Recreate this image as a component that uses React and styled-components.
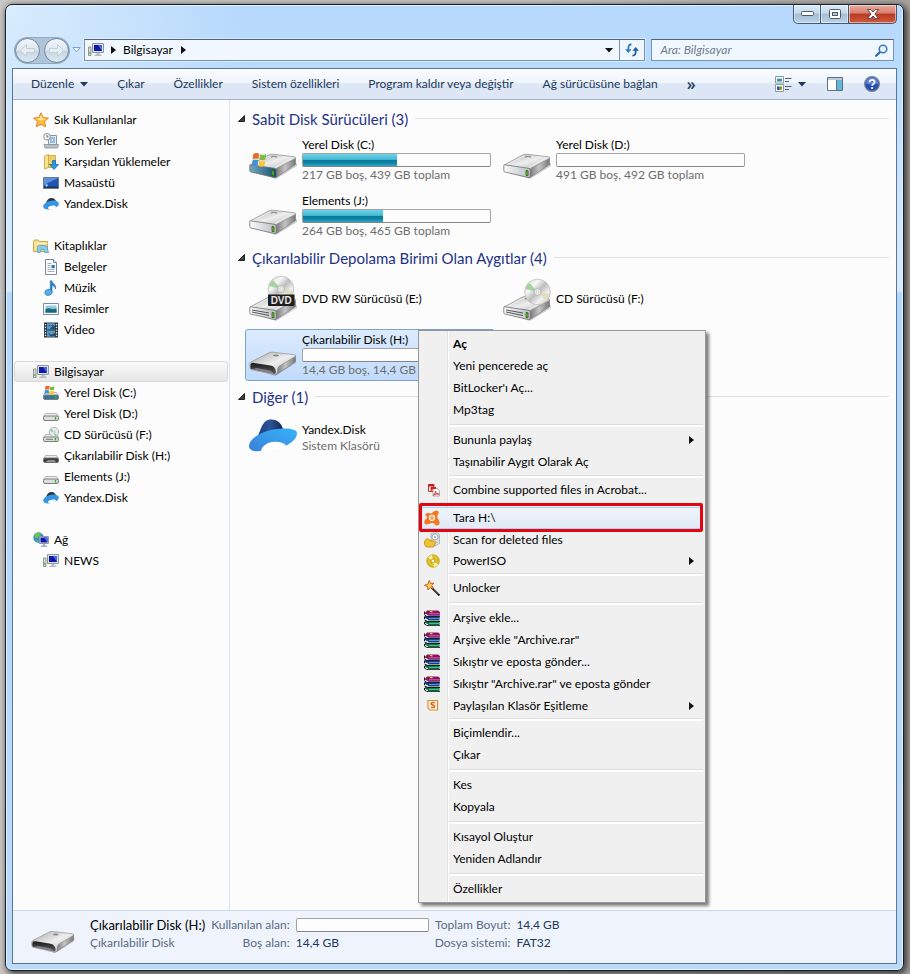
import React from "react";
import styled, { createGlobalStyle, css } from "styled-components";

const GlobalStyle = createGlobalStyle`
  * {
    box-sizing: border-box;
  }
  body {
    margin: 0;
    background: linear-gradient(to right, #c9c7c5 0, #c9c7c5 60%, #a5a2a0 100%);
    font-family: Lato, "Open Sans", "Noto Sans", sans-serif;
    font-size: 12px;
    line-height: 16px;
    color: #000;
  }
  button, input {
    font: inherit;
    color: inherit;
    margin: 0;
    padding: 0;
    border: none;
    background: none;
  }
  a {
    color: inherit;
    text-decoration: none;
  }
  svg {
    display: block;
    flex: none;
  }
  h2, ul, dl, dd, dt, p {
    margin: 0;
    padding: 0;
    font-weight: normal;
    list-style: none;
  }
`;

/* ---------- window frame ---------- */

const Page = styled.div`
  display: flex;
  min-height: 100vh;
  padding: 4px 6px 3px 5px;
`;

const Window = styled.div`
  display: flex;
  flex-direction: column;
  flex: 1;
  min-width: 0;
  padding: 0 6px 6px;
  border: 1px solid #15202c;
  border-radius: 7px;
  background:
    radial-gradient(ellipse at 0 0, #d9ecfd 0, rgba(217, 236, 253, 0) 240px),
    linear-gradient(#b6d8fc 0, #b9dbfd 70px, #cfe6fb 200px, #d9ebfb 286px, #b4d6fa 288px, #bbdafa 100%);
  box-shadow: inset 0 0 0 1px #e2f2ff, 2px 2px 6px 1px #3d3a38;
`;

const Caption = styled.div`
  display: flex;
  justify-content: flex-end;
`;

const CaptionButton = styled.button`
  display: flex;
  align-items: center;
  justify-content: center;
  width: ${(p) => (p.$close ? 48 : 28)}px;
  height: 19px;
  border: 1px solid #46586e;
  border-top: none;
  border-left-width: ${(p) => (p.$first ? 1 : 0)}px;
  border-radius: ${(p) => (p.$first ? "0 0 0 5px" : p.$close ? "0 0 5px 0" : "0")};
  background: ${(p) =>
    p.$close
      ? "linear-gradient(#e9aa9c 0, #d8806f 45%, #bb3a24 50%, #cf5a3b 100%)"
      : "linear-gradient(#dcebfa 0, #c5d7ea 45%, #a5bdd5 50%, #b9d2eb 100%)"};
  box-shadow: inset 0 0 0 1px rgba(255, 255, 255, 0.5);
`;

const NavRow = styled.div`
  display: flex;
  align-items: center;
  margin: 15px 3px 7px 3px;
  height: 22px;
`;

const NavButtons = styled.div`
  display: flex;
  align-items: center;
  gap: 4px;
  height: 25px;
  border-radius: 13px;
  background: #adc4da;
  box-shadow: 0 0 0 1px #94abc2;
`;

const RoundButton = styled.button`
  display: flex;
  align-items: center;
  justify-content: center;
  width: 25px;
  height: 25px;
  border: 1px solid #75889b;
  border-radius: 50%;
  background: linear-gradient(#f1f6fb 0, #dce6f0 48%, #c9d6e3 52%, #dbe9f5 100%);
`;

const HistoryButton = styled.button`
  width: 9px;
  margin: 0 3px;
`;

const AddressBar = styled.div`
  display: flex;
  align-items: center;
  flex: 22;
  min-width: 0;
  height: 22px;
  padding-left: 3px;
  border: 1px solid #7c93ad;
  border-top-color: #4f6478;
  background: #f0f7ff;
  box-shadow: 0 0 0 1px rgba(255, 255, 255, 0.4);
`;

const Crumb = styled.button`
  display: flex;
  align-items: center;
  gap: 8px;
  margin-left: 7px;
  white-space: nowrap;
`;

const DropButton = styled.button`
  display: flex;
  align-items: center;
  margin: 0 6px 0 auto;
`;

const RefreshButton = styled.button`
  display: flex;
  align-items: center;
  justify-content: center;
  align-self: stretch;
  width: 25px;
  border-left: 1px solid #7c93ad;
`;

const SearchBox = styled.label`
  display: flex;
  align-items: center;
  flex: 9;
  min-width: 0;
  height: 22px;
  margin-left: 6px;
  padding: 0 5px 0 8px;
  border: 1px solid #7c93ad;
  border-top-color: #4f6478;
  background: #f0f7ff;
  input {
    flex: 1;
    min-width: 0;
    outline: none;
  }
  input::placeholder {
    color: #6e7c8a;
    font-style: italic;
    opacity: 1;
  }
`;

const Client = styled.div`
  display: flex;
  flex-direction: column;
  flex: 1;
  border: 1px solid #5b7594;
  background: #fcfcfc;
`;

/* ---------- toolbar ---------- */

const Toolbar = styled.div`
  display: flex;
  align-items: center;
  height: 31px;
  padding: 0 16px 0 18px;
  border-bottom: 1px solid #a0b3cc;
  background: linear-gradient(#fbfdff 0, #eef4fb 45%, #dde7f5 50%, #dce6f4 100%);
  color: #1e395b;
`;

const Commands = styled.div`
  display: flex;
  align-items: center;
  gap: 29px;
  white-space: nowrap;
`;

const ToolButton = styled.button`
  display: flex;
  align-items: center;
  gap: 6px;
`;

const MoreButton = styled.button`
  font-family: "Open Sans", sans-serif;
  font-size: 16px;
  font-weight: 600;
`;

const ToolIcons = styled.div`
  display: flex;
  align-items: center;
  gap: 21px;
  margin-left: auto;
`;

/* ---------- navigation pane ---------- */

const Body = styled.div`
  display: flex;
  flex: 1;
`;

const Sidebar = styled.nav`
  flex: none;
  width: 217px;
  padding: 9px 1px;
  border-right: 1px solid #d6e5f5;
`;

const Tree = styled.ul`
  & + & {
    margin-top: 21px;
  }
`;

const TreeLink = styled.a`
  display: flex;
  align-items: center;
  gap: 5px;
  height: 21px;
  padding-left: ${(p) => (p.$child ? 28 : 18)}px;
  border: 1px solid transparent;
  border-radius: 3px;
  white-space: nowrap;
  ${(p) =>
    p.$selected &&
    css`
      border-color: #d9d9d9;
      background: linear-gradient(#fafafa, #e6e6e6);
    `}
`;

/* ---------- file area ---------- */

const Files = styled.main`
  flex: 1;
  min-width: 0;
  padding: 3px 7px 0 8px;
`;

const GroupHeader = styled.h2`
  display: flex;
  align-items: center;
  gap: 7px;
  height: 31px;
  color: #1e3287;
  font-size: 15px;
  line-height: 20px;
  white-space: nowrap;
  &::after {
    content: "";
    flex: 1;
    height: 1px;
    background: #dfdfe2;
  }
`;

const Tiles = styled.div`
  display: grid;
  grid-template-columns: repeat(auto-fill, 250px);
  gap: 4px;
  padding-left: 7px;
`;

const TileCell = styled.div`
  position: relative;
`;

const Tile = styled.button`
  display: flex;
  align-items: center;
  gap: 5px;
  width: 100%;
  height: 52px;
  padding: 0 3px;
  border: 1px solid transparent;
  border-radius: 3px;
  text-align: left;
  white-space: nowrap;
  ${(p) =>
    p.$selected &&
    css`
      border-color: #7da2ce;
      background: linear-gradient(#dcebfd, #c1dbfc);
    `}
`;

const TileText = styled.span`
  display: flex;
  flex-direction: column;
`;

const Muted = styled.span`
  color: #6d6d6d;
`;

const Track = styled.span`
  display: flex;
  width: ${(p) => p.$width}px;
  height: 14px;
  border: 1px solid #a3a3a3;
  border-bottom-color: #858585;
  border-radius: 2px;
  background: #fdfdfd;
`;

const Fill = styled.span`
  background: linear-gradient(#6fd0e4 0, #45bcd5 45%, #0a7799 52%, #0f83a6 75%, #2ba8c6 100%);
`;

/* ---------- context menu ---------- */

const Menu = styled.div`
  position: absolute;
  z-index: 2;
  left: 173px;
  top: 1px;
  width: 288px;
  padding: 2px;
  border: 1px solid #979797;
  background: linear-gradient(to right, #f0f0f0 28px, #e2e3e3 28px, #e2e3e3 29px, #fff 29px, #fff 30px, #f0f0f0 30px);
  box-shadow: 3px 3px 3px rgba(0, 0, 0, 0.5);
`;

const MenuItem = styled.button`
  position: relative;
  display: grid;
  grid-template-columns: 22px 1fr auto;
  align-items: center;
  column-gap: 7px;
  width: 100%;
  height: ${(p) => (p.$compact ? 21 : 22)}px;
  padding: 0 9px 0 3px;
  text-align: left;
  white-space: nowrap;
  font-weight: ${(p) => (p.$default ? 700 : 400)};
  ${(p) =>
    p.$hot &&
    css`
      background: linear-gradient(#f0f4f9, #e0e9f6);
      box-shadow: inset 0 0 0 1px #aecff7;
      &::after {
        content: "";
        position: absolute;
        inset: -4px 0 -3px -2px;
        border: 3px solid #e3060e;
        border-radius: 2px;
      }
    `}
`;

const MenuIcon = styled.span`
  display: flex;
`;

const MenuLine = styled.div`
  height: ${(p) => (p.$tight ? 6 : 8)}px;
  margin-left: 28px;
  padding-top: ${(p) => (p.$tight ? 2 : 3)}px;
  &::after {
    content: "";
    display: block;
    height: 2px;
    border-top: 1px solid #dedede;
    background: #fff;
  }
`;

/* ---------- details pane ---------- */

const Details = styled.footer`
  display: flex;
  align-items: flex-start;
  gap: 15px;
  height: 53px;
  padding: 5px 18px;
  border-top: 1px solid #c9d9ea;
  background: #eff3fc;
  white-space: nowrap;
  svg {
    margin-top: -4px;
  }
`;

const DetailGrid = styled.dl`
  display: grid;
  grid-template-columns: auto auto 133px auto auto;
  grid-auto-rows: 18px;
  align-items: center;
  column-gap: 6px;
  color: #1e395b;
  dt {
    color: #5a6b84;
    text-align: right;
  }
`;

const DetailTitle = styled.dd`
  color: ${(p) => (p.$main ? "#000" : "#5a6b84")};
  font-size: ${(p) => (p.$main ? 13 : 12)}px;
`;

/* ---------- glyphs ---------- */

const Down = ({ color = "#1e395b" }) => (
  <svg width="8" height="5" viewBox="0 0 8 5"><path d="M0 0h8L4 4.5z" fill={color} /></svg>
);

const Right = () => (
  <svg width="5" height="8" viewBox="0 0 5 8"><path d="M0 0l5 4-5 4z" fill="#111" /></svg>
);

const Corner = () => (
  <svg width="7" height="7" viewBox="0 0 7 7"><path d="M6.500.5v6h-6z" fill="#404040" stroke="#222" /></svg>
);

const NavArrow = ({ flip }) => (
  <svg width="17" height="15" viewBox="0 0 17 15">
    <path d="M1.500 7.500l6-6v4h8v4h-8v4z" fill="#e6edf3" stroke="#c3d0dc" strokeLinejoin="round" transform={flip ? "translate(17 0) scale(-1 1)" : undefined} />
  </svg>
);

const Refresh = () => (
  <svg width="14" height="14" viewBox="0 0 14 14">
    <path d="M6.500 1.500C4 1.300 3.300 2.500 3.300 7" fill="none" stroke="#2f7fbf" strokeWidth="1.800" />
    <path d="M0 6.200h6.600L3.300 10z" fill="#2f7fbf" />
    <path d="M7.500 12.500c2.500.2 3.200-1 3.200-5.500" fill="none" stroke="#1f5f9f" strokeWidth="1.800" />
    <path d="M7.400 7.800H14L10.700 4z" fill="#1f5f9f" />
  </svg>
);

const Magnifier = () => (
  <svg width="13" height="13" viewBox="0 0 13 13">
    <path d="M5.200 7.800L1.200 11.800" stroke="#2a64a5" strokeWidth="2.200" strokeLinecap="round" />
    <circle cx="8" cy="5" r="3.800" fill="#e4f2fd" stroke="#3b78b8" strokeWidth="1.500" />
  </svg>
);

const ViewIcon = () => (
  <svg width="17" height="16" viewBox="0 0 17 16">
    <path d="M.5.500h8v6.500h-8zM.5 8.500h8v7h-8z" fill="#fff" stroke="#8b98a5" />
    <path d="M2 2h5v3.500H2z" fill="#2f9aa0" /><path d="M2 2h5v1H2z" fill="#a9dcec" />
    <path d="M2 10.500h5V14H2z" fill="#5aa02c" />
    <path d="M2 10.500h2V14H2z" fill="#3b4fc0" /><path d="M5 12.500h2V14H5z" fill="#d8a020" />
    <path d="M10 2.500h6.500M10 5.500h4M10 10.500h6.500M10 13.500h4" stroke="#4d617a" />
  </svg>
);

const PaneIcon = () => (
  <svg width="16" height="14" viewBox="0 0 16 14">
    <path d="M.5.500h15v13H.5z" fill="#fff" stroke="#5c7188" />
    <path d="M1 1h14v2H1z" fill="#bccbdc" />
    <path d="M10 3h5v10h-5z" fill="#62b7d8" /><path d="M9.500 3v10" stroke="#5c7188" />
  </svg>
);

const HelpIcon = () => (
  <svg width="16" height="16" viewBox="0 0 16 16">
    <circle cx="8" cy="8" r="7.400" fill="#2a4fb0" stroke="#7a8699" strokeWidth="1.200" />
    <path d="M1.800 7.500a6.200 6.200 0 0 1 12.400 0C10 9 6 9 1.800 7.500z" fill="#5b82d8" />
    <path d="M5.600 6.200c0-3.200 5-3 5-.1 0 1.900-2.500 1.800-2.500 3.700" fill="none" stroke="#fff" strokeWidth="1.700" />
    <circle cx="8.100" cy="12" r="1.100" fill="#fff" />
  </svg>
);

/* ---------- 16px icons ---------- */

const Small = ({ children }) => (
  <svg width="16" height="16" viewBox="0 0 16 16">{children}</svg>
);

const StarIcon = () => (
  <Small>
    <path d="M8 .8l2.200 4.700 5.200.6-3.900 3.500 1.100 5.200L8 12.200l-4.600 2.600 1.100-5.200L.6 6.100l5.200-.6z" fill="#fdbd3e" stroke="#e5822a" strokeLinejoin="round" />
    <path d="M8 3l1.500 3.300 3.300.5L8 8.500 3.200 6.800l3.300-.5z" fill="#ffe9a0" />
  </Small>
);

const RecentIcon = () => (
  <Small>
    <path d="M5.500 2.500h8v9h-8z" fill="#dfeaf4" stroke="#8496a8" />
    <path d="M7 5h5M7 7h2M10 7h2M7 9h5" stroke="#4c8dc4" />
    <path d="M1 11.500h14.500l-1 3.500H2z" fill="#b9c0c6" stroke="#8a9299" strokeWidth=".8" />
    <circle cx="4" cy="3.800" r="3.300" fill="#f4f6f7" stroke="#8d979f" />
    <path d="M4 2v2h1.500" fill="none" stroke="#555" strokeWidth=".8" />
  </Small>
);

const DownloadsIcon = () => (
  <Small>
    <path d="M1.500 2l4-1.500v13L1.500 15z" fill="#f7e296" stroke="#d3ac45" />
    <path d="M5.500 1.500h7v12h-7z" fill="#efcf6d" stroke="#d3ac45" />
    <path d="M9.500 6.500h3v4h3L11 15.500 6.500 10.500h3z" fill="#3397e0" stroke="#1869ad" strokeWidth=".8" />
  </Small>
);

const DesktopIcon = () => (
  <Small>
    <path d="M.5 2.500h15v11H.5z" fill="#1f54b3" stroke="#6b7c8c" />
    <path d="M1 3h14L1 10z" fill="#5f92de" /><path d="M1 11.500h14V13H1z" fill="#1d3557" />
    <path d="M2 10l2-1 1 1.500L3.500 12z" fill="#8fd6f2" />
  </Small>
);

const YandexIcon = () => (
  <Small>
    <path d="M3 7.500C4 3.500 6 2 8.500 2c3 0 4.500 2 5 5z" fill="#2c3846" />
    <ellipse cx="8" cy="9" rx="8" ry="4.200" transform="rotate(-14 8 9)" fill="#3794e0" />
    <ellipse cx="9" cy="11.500" rx="4" ry="1.900" transform="rotate(-12 9 11.500)" fill="#fcfcfc" />
  </Small>
);

const LibraryIcon = () => (
  <Small>
    <path d="M.5 3.500l1-1.500h4l1 1.500h8v10H.5z" fill="#f5e08d" stroke="#cda94a" />
    <path d="M1 5.500h13.500" stroke="#fff3bd" />
    <path d="M4.500 14.500V9.200c0-1 .8-1.700 1.700-1.700h6c1 0 1.800.7 1.800 1.700l1.500 5.300h-3.800L11 11.500H8l-.7 3z" fill="#8ccbea" stroke="#4f9cc9" strokeWidth=".8" />
  </Small>
);

const DocumentIcon = () => (
  <Small>
    <path d="M2.500.5h8l3 3v12h-11z" fill="#fff" stroke="#7c8894" /><path d="M10.500.5v3h3" fill="#dce4ec" stroke="#7c8894" />
    <path d="M4.500 4.500h4M4.500 6.500h3M4.500 8.500h3M4.500 10.500h7M4.500 12.500h7" stroke="#9db0c4" />
    <path d="M8.500 6h3.200v3.200H8.500z" fill="#2f74b8" />
  </Small>
);

const MusicIcon = () => (
  <Small>
    <path d="M7.300 12V.8h1.500c.4 2.500 4.700 3.700 3.700 8.200-.5-2.400-1.800-3-3.500-3.400V12" fill="#2b87cf" stroke="#1d6aa9" strokeWidth=".6" />
    <ellipse cx="5.500" cy="12.300" rx="3.700" ry="3" transform="rotate(-15 5.500 12.300)" fill="#53b1ec" stroke="#1f72b4" strokeWidth=".7" />
  </Small>
);

const PictureIcon = () => (
  <Small>
    <path d="M.5 2.500h15v11H.5z" fill="#fff" stroke="#7f8c99" />
    <path d="M2.500 4.500h11v7h-11z" fill="#8fcdf0" /><path d="M2.500 8c3-2 5 1 11-.5v4h-11z" fill="#22705e" />
    <path d="M2.500 9.800h11v1.700h-11z" fill="#1f5fa0" />
  </Small>
);

const VideoIcon = () => (
  <Small>
    <path d="M1 .5h14v15H1z" fill="#2d3740" />
    <path d="M4 1.200h8v6.300H4zM4 8.500h8v6.300H4z" fill="#4d9bd8" />
    <path d="M5 3l3 2-1 2.500h5V3.500zM5 10l3 2.800 4-2v3.500H7z" fill="#27506f" /><path d="M7 3.500l2 1.500M8 10.500l2 1" stroke="#e58a4b" />
    <path d="M2.500 2v12M13.500 2v12" stroke="#e6edf2" strokeWidth="1.300" strokeDasharray="1.300 1.400" />
  </Small>
);

const ComputerIcon = () => (
  <Small>
    <path d="M.5 5h2.500v8.500H.5z" fill="#d5dbd5" stroke="#7b857b" strokeWidth=".8" /><path d="M1 11h1.500" stroke="#49b338" strokeWidth="1.500" />
    <path d="M4.500 1.500h11v9h-11z" fill="#dce0e4" stroke="#8f979f" />
    <path d="M6 3h8v6H6z" fill="#101aa8" /><path d="M10 3h4v6z" fill="#4b67e4" />
    <path d="M8.500 11h3v1.500h2V14h-7v-1.500h2z" fill="#b5bcc3" />
  </Small>
);

const NetworkIcon = () => (
  <Small>
    <circle cx="5.500" cy="5.500" r="5.200" fill="#2f8fd0" />
    <path d="M1.500 3c2-3 5-3 7-1-1 2-3 1-3 3s-3 1-4 0zM3 8c2-1 3 1 2 2.600z" fill="#6cc24a" />
    <path d="M6.500 4.500h9v7h-9z" fill="#dfe6ee" stroke="#8f979f" />
    <path d="M7.500 5.500h7v5h-7z" fill="#101aa8" /><path d="M11 5.500h3.500v5z" fill="#4b67e4" />
    <path d="M10 12h2v1.500h2V15H8v-1.500h2z" fill="#9fb0c0" />
  </Small>
);

const Flag = () => (
  <g>
    <path d="M1.200 1.600C3 .6 4.800.6 6.600 1.500L5.900 6C4.200 5.200 2.300 5.200.5 6.200z" fill="#ea6a2c" />
    <path d="M7.400 1.800c1.800.9 3.600.9 5.400-.1l-.7 4.500c-1.800.9-3.600.9-5.400 0z" fill="#7dbb3c" />
    <path d="M.4 7c1.800-1 3.600-1 5.400-.1l-.7 4.500C3.300 10.500 1.500 10.500-.3 11.500z" fill="#3f93db" />
    <path d="M6.600 7.200c1.800.9 3.600.9 5.400 0l-.7 4.500c-1.800.9-3.600.9-5.400 0z" fill="#fbc533" />
  </g>
);

const FlatDrive = ({ dark, blue }) => (
  <g>
    <path d="M2.500 7.500h11l2 3H.5z" fill="#eceeef" stroke="#a3a6a8" strokeWidth=".8" />
    <rect x=".5" y="10" width="15" height="4.500" rx="1.500" fill={dark ? "#3b3d3f" : blue ? "#38759a" : "#dcdedf"} stroke={dark ? "#707274" : "#7b7e80"} />
    {dark ? <path d="M3 14l1.500-2h7l1.500 2z" fill="#8d8f91" /> : <path d="M12.500 11v2.500" stroke="#35b01d" strokeWidth="1.500" />}
  </g>
);

const DriveIcon = () => <Small><FlatDrive /></Small>;
const UsbIcon = () => <Small><FlatDrive dark /></Small>;

const SystemDriveIcon = () => (
  <Small>
    <FlatDrive blue />
    <g transform="translate(1.500 0) scale(.78)"><Flag /></g>
  </Small>
);

const CdDriveIcon = () => (
  <Small>
    <FlatDrive />
    <circle cx="11" cy="5" r="4.600" fill="#e9edf0" stroke="#9da4a9" strokeWidth=".8" />
    <path d="M11 5L8 1.500 7 4zM11 5l3 3.500L12 9.500z" fill="#7fc98a" /><circle cx="11" cy="5" r="1.200" fill="#fff" stroke="#aaa" strokeWidth=".6" />
    <path d="M3 12.300h7" stroke="#777" />
  </Small>
);

const AcrobatIcon = () => (
  <Small>
    <path d="M4.500 2.500h5v7h-5z" fill="#fff" stroke="#b33" /><path d="M4 2.500h6.500v2H4z" fill="#c11c1c" />
    <path d="M9 6.500h4.500l2 2v5.500H9z" fill="#fff" stroke="#999" strokeWidth=".8" />
    <path d="M6.500 5H12v2H8.500v3l-2-2z" fill="#d12424" />
    <path d="M9.500 13.200c1.500-1 2-3 1.800-4 .5 2 2 3 3.500 2.800-2-.4-3.500.2-5.300 1.200z" fill="none" stroke="#d12424" />
  </Small>
);

const AvastIcon = () => (
  <Small>
    <path d="M1.300 4.300C2.500 2.700 5 2.800 7 3.500c1.700-.2 2.300-2.500 4.300-2.700C14-.3 15.800 2.500 14 4.200c-1 1.200-.8 2.500-.2 4.300 1 1.500 2.400 3.500 1.600 5.500-1.200 2-4 1.800-4.800-.1-.8-1.300-2.300-1-3.600-.7-2 .6-4 1.800-6 .9C-.5 12.600.7 10 2 9c1.300-1 1.300-2 .4-3C1.800 5.500 1 5.200 1.300 4.300z" fill="#f57a20" />
    <circle cx="8" cy="7.800" r="2.500" fill="none" stroke="#fff" strokeWidth="1.300" /><circle cx="8" cy="7.800" r=".8" fill="#fff" />
  </Small>
);

const ScanIcon = () => (
  <Small>
    <path d="M7 1.500l6-1 2.500 2v9l-6 3L7 12z" fill="#d9dde0" stroke="#a5abb0" strokeWidth=".8" />
    <circle cx="11" cy="5" r="3" fill="#f7f8f9" stroke="#999" strokeWidth=".8" /><circle cx="11" cy="5" r=".9" fill="#999" />
    <path d="M.5 11c0-3 2-5 4-4l1 1.500 5 .8c2 .3 2 2 .3 2.300L9.500 15H3C1.300 15 .5 13 .5 11z" fill="#f1c232" stroke="#bf8a14" strokeWidth=".8" />
  </Small>
);

const IsoIcon = () => (
  <Small>
    <circle cx="9" cy="8" r="6.300" fill="#e0bf25" stroke="#b7961c" strokeWidth=".7" />
    <path d="M9 8L4 4.500A6 6 0 0 1 8 2zM9 8l5 3.500a6 6 0 0 1-4 2.500z" fill="#fbf09a" />
    <circle cx="9" cy="8" r="1.900" fill="#fffbe0" stroke="#a98a1a" strokeWidth=".7" />
  </Small>
);

const WandIcon = () => (
  <Small>
    <path d="M7.500 7.500l8 8" stroke="#222" strokeWidth="2" /><path d="M9 8.300l6 6" stroke="#aaa" strokeWidth=".6" />
    <path d="M5.300.5l1.200 3 3.200-.4-2 2.500 1.600 2.800-3.100-.8-2.300 2.400-.1-3.300L.5 5.300l3.300-1z" fill="#ffd34d" stroke="#c2521d" strokeWidth=".9" />
  </Small>
);

const RarIcon = () => (
  <Small>
    <path d="M3 .5h11l2 1.500v3.500H4L.5 3.500z" fill="#8b1560" /><path d="M5 3.800h11" stroke="#e05aa0" />
    <path d="M1 6h3l1-.5h10.500V10H4.500L.5 8z" fill="#173e8e" /><path d="M5 8.300h11" stroke="#67a8ef" />
    <path d="M1 11h3l1-.5h10.500V15H4.500L.5 13z" fill="#0c6e46" /><path d="M5 13.300h11" stroke="#4fd193" />
    <path d="M.5 5l3.500 1.800h12M.5 10l3.500 1.500h12M.5 14.300L4 15.700h12M.5 1.500v3M.5 6.500V9M.5 12v2" fill="none" stroke="#161616" />
    <path d="M1.300 4.300l2.500 1.200M1.300 8.800L3.800 10M1.300 13.500l2.500 1.100" stroke="#fff" strokeWidth=".9" />
    <path d="M6 1.300l2.500.6" stroke="#f2cc45" strokeWidth="1.300" />
  </Small>
);

const SyncIcon = () => (
  <Small>
    <path d="M4 3.500h9.500v9.500H6L4 11z" fill="#fff7e8" stroke="#e08b2a" strokeWidth="1.200" transform="translate(0 -1)" />
    <path d="M10.800 5C9 4 7 4.500 7 5.700c0 1.600 3.600 1 3.600 2.700C10.600 9.700 8.500 10 6.800 9" fill="none" stroke="#d95f12" strokeWidth="1.400" />
  </Small>
);

/* ---------- 48px icons ---------- */

const DriveDefs = () => (
  <svg width="0" height="0" style={{ position: "absolute" }} aria-hidden="true">
    <defs>
      <linearGradient id="driveTop" x1="0" y1="0" x2="1" y2="1">
        <stop offset="0" stopColor="#a6a6a6" /><stop offset=".5" stopColor="#eeeeee" /><stop offset="1" stopColor="#b4b4b4" />
      </linearGradient>
      <linearGradient id="driveSide" x1="0" y1="0" x2="1" y2="0">
        <stop offset="0" stopColor="#6e6e6e" /><stop offset=".5" stopColor="#c4c4c4" /><stop offset="1" stopColor="#777" />
      </linearGradient>
      <linearGradient id="driveFront" x1="0" y1="0" x2="1" y2="0">
        <stop offset="0" stopColor="#fafafa" /><stop offset="1" stopColor="#b8bcc4" />
      </linearGradient>
      <linearGradient id="driveBlue" x1="0" y1="0" x2="1" y2="0">
        <stop offset="0" stopColor="#6fa9c4" /><stop offset="1" stopColor="#15506f" />
      </linearGradient>
      <linearGradient id="mouth" x1="0" y1="0" x2="0" y2="1">
        <stop offset="0" stopColor="#1c1c1c" /><stop offset="1" stopColor="#5a5a5a" />
      </linearGradient>
      <linearGradient id="disc" x1="0" y1="0" x2="1" y2="1">
        <stop offset="0" stopColor="#d4d4d4" /><stop offset=".3" stopColor="#f6f6f6" /><stop offset=".5" stopColor="#bdbdbd" /><stop offset=".7" stopColor="#f1f1f1" /><stop offset="1" stopColor="#c4c4c4" />
      </linearGradient>
      <linearGradient id="brim" x1="0" y1="1" x2="1" y2="0">
        <stop offset="0" stopColor="#3b7fd8" /><stop offset="1" stopColor="#35b4fb" />
      </linearGradient>
      <linearGradient id="hat" x1="0" y1="0" x2="1" y2="0">
        <stop offset="0" stopColor="#1b3f85" /><stop offset=".5" stopColor="#2c5596" /><stop offset="1" stopColor="#122650" />
      </linearGradient>
    </defs>
  </svg>
);

const DriveBody = ({ front = "url(#driveFront)", slot }) => (
  <g transform="translate(0 -1)">
    <path d="M3 37l24 7 21-13v-3z" fill="#000" opacity=".18" />
    <path d="M25.500 33.500L46.500 23v6.500L27.500 42.200l-2 .3z" fill="url(#driveSide)" stroke="#777" strokeWidth=".6" />
    <path d="M.8 30.200L19 20.300c2-1 3.500-1.300 5.500-1l21 2.500c1.500.3 1.500 1.200.3 2L28 33.300c-1 .6-2 .7-3 .5z" fill="url(#driveTop)" stroke="#8d8d8d" strokeWidth=".7" />
    <path d="M4 29.800l17-9M26 32.500L44 22.700" stroke="#fff" strokeWidth=".8" opacity=".8" />
    <ellipse cx="25" cy="22" rx="3" ry="1" fill="#777" /><ellipse cx="25" cy="22.400" rx="2" ry=".6" fill="#ddd" />
    <path d="M.8 30.500c0-.6.500-.8 1-.7L25 33.200c1.500.2 2.300.9 2.300 2v5.500c0 1.300-.7 2-2.300 1.700L2 37c-.9-.2-1.200-.6-1.200-1.300z" fill={front} stroke="#737373" strokeWidth=".8" />
    {slot && <path d="M3 33l17 3M3 35l17 3.500" stroke="#555" strokeWidth="1" />}
    <path d="M23 35.500l2 .3v5l-2-.4z" fill="#69c62a" stroke="#2b5c17" strokeWidth=".8" />
  </g>
);

const Disc = ({ cx, cy }) => (
  <g>
    <circle cx={cx} cy={cy} r="12.800" fill="url(#disc)" stroke="#b9b5b0" strokeWidth=".7" />
    <path d={`M${cx} ${cy}l-12-3a12 12 0 0 1 4-6z`} fill="#8ccf8a" opacity=".8" />
    <path d={`M${cx} ${cy}l12 2a12 12 0 0 1-4 6z`} fill="#d7dfb0" opacity=".8" />
    <circle cx={cx} cy={cy} r="3.500" fill="#e8e8e8" stroke="#aaa" strokeWidth=".7" /><circle cx={cx} cy={cy} r="1.300" fill="#fff" stroke="#bbb" strokeWidth=".5" />
  </g>
);

const Large = ({ size = 48, children }) => (
  <svg width={size} height={size} viewBox="0 0 48 48">{children}</svg>
);

const BigDrive = () => <Large><DriveBody /></Large>;

const BigSystemDrive = () => (
  <Large>
    <DriveBody front="url(#driveBlue)" />
    <g transform="translate(3 16) scale(1.100 1.200)"><Flag /></g>
  </Large>
);

const BigDvd = () => (
  <Large>
    <g transform="translate(0 3)"><DriveBody slot /></g>
    <Disc cx={32} cy={14} />
    <path d="M19 19.500h26.500V30a1 1 0 0 1-1 1H20a1 1 0 0 1-1-1z" fill="#1d1d1d" />
    <text x="32.200" y="29" textAnchor="middle" fontSize="10" fontFamily="Liberation Sans, sans-serif" fontWeight="bold" fill="#e8e8e8">DVD</text>
  </Large>
);

const BigCd = () => (
  <Large>
    <g transform="translate(0 3)"><DriveBody slot /></g>
    <Disc cx={34.500} cy={17} />
  </Large>
);

const BigUsb = ({ size }) => (
  <Large size={size}>
    <path d="M3 37l23 8 21-13v-4z" fill="#000" opacity=".18" />
    <path d="M27 34L46.500 25v5.500L29 42.500l-2.500 1z" fill="url(#driveSide)" stroke="#777" strokeWidth=".6" />
    <path d="M.8 33.500c0-1.500.8-2.200 2-2.900L19 22.300c2-1 3.500-1.300 5.500-1l21 2.500c1.500.3 1.500 1.200.3 2L30 35.300c-1.500 1.500-1.500 4-1.500 7L26 43.800 2 38.500c-1.200-.6-1.200-2.500-1.200-5z" fill="url(#driveTop)" stroke="#8d8d8d" strokeWidth=".7" />
    <path d="M1.500 34c.2-1.800 1.500-2.400 3.500-2.100l16.500 2.600c3.500.7 5.300 3 5.500 7.500l-1.500 1L2 38c-.6-1-.7-2.500-.5-4z" fill="url(#mouth)" />
    <path d="M3 38l5-1 13 2.500 4.500 3.200z" fill="#9a9a9a" opacity=".7" />
    <ellipse cx="27" cy="24.500" rx="3" ry="1" fill="#888" />
  </Large>
);

const BigYandex = () => (
  <Large>
    <path d="M8.500 23C12 15 13.500 7.500 19 6c6-1.500 12.500.5 15 9L22 26z" fill="url(#hat)" />
    <path d="M0 32C0 25 12 17.500 26 15.300c12-1.800 22-.3 22 3.700 0 5-4 9-11 12.500l-24 5.300C5 38 0 36.500 0 32z" fill="url(#brim)" />
    <path d="M12 37c1-5.500 7-9 13.500-9.300 5-.2 9.500 1 11.500 3.600C31 35.500 21 38 12 37z" fill="#fff" />
  </Large>
);

/* ---------- data ---------- */

const trees = [
  [
    ["Sık Kullanılanlar", StarIcon],
    ["Son Yerler", RecentIcon],
    ["Karşıdan Yüklemeler", DownloadsIcon],
    ["Masaüstü", DesktopIcon],
    ["Yandex.Disk", YandexIcon],
  ],
  [
    ["Kitaplıklar", LibraryIcon],
    ["Belgeler", DocumentIcon],
    ["Müzik", MusicIcon],
    ["Resimler", PictureIcon],
    ["Video", VideoIcon],
  ],
  [
    ["Bilgisayar", ComputerIcon],
    ["Yerel Disk (C:)", SystemDriveIcon],
    ["Yerel Disk (D:)", DriveIcon],
    ["CD Sürücüsü (F:)", CdDriveIcon],
    ["Çıkarılabilir Disk (H:)", UsbIcon],
    ["Elements (J:)", DriveIcon],
    ["Yandex.Disk", YandexIcon],
  ],
  [
    ["Ağ", NetworkIcon],
    ["NEWS", ComputerIcon],
  ],
];

const groups = [
  {
    title: "Sabit Disk Sürücüleri (3)",
    items: [
      { name: "Yerel Disk (C:)", icon: BigSystemDrive, used: 50, note: "217 GB boş, 439 GB toplam" },
      { name: "Yerel Disk (D:)", icon: BigDrive, used: 0, note: "491 GB boş, 492 GB toplam" },
      { name: "Elements (J:)", icon: BigDrive, used: 43, note: "264 GB boş, 465 GB toplam" },
    ],
  },
  {
    title: "Çıkarılabilir Depolama Birimi Olan Aygıtlar (4)",
    items: [
      { name: "DVD RW Sürücüsü (E:)", icon: BigDvd },
      { name: "CD Sürücüsü (F:)", icon: BigCd },
      { name: "Çıkarılabilir Disk (H:)", icon: BigUsb, used: 0, note: "14,4 GB boş, 14,4 GB toplam", selected: true },
    ],
  },
  {
    title: "Diğer (1)",
    items: [{ name: "Yandex.Disk", icon: BigYandex, note: "Sistem Klasörü" }],
  },
];

const menu = [
  { label: "Aç", bold: true },
  { label: "Yeni pencerede aç" },
  { label: "BitLocker'ı Aç..." },
  { label: "Mp3tag" },
  { line: true },
  { label: "Bununla paylaş", sub: true },
  { label: "Taşınabilir Aygıt Olarak Aç" },
  { line: true, tight: true },
  { label: "Combine supported files in Acrobat...", icon: AcrobatIcon },
  { line: true, tight: true },
  { label: "Tara H:\\", icon: AvastIcon, hot: true },
  { label: "Scan for deleted files", icon: ScanIcon, compact: true },
  { label: "PowerISO", icon: IsoIcon, compact: true, sub: true },
  { line: true, tight: true },
  { label: "Unlocker", icon: WandIcon },
  { line: true },
  { label: "Arşive ekle...", icon: RarIcon },
  { label: 'Arşive ekle "Archive.rar"', icon: RarIcon },
  { label: "Sıkıştır ve eposta gönder...", icon: RarIcon },
  { label: 'Sıkıştır "Archive.rar" ve eposta gönder', icon: RarIcon },
  { label: "Paylaşılan Klasör Eşitleme", icon: SyncIcon, compact: true, sub: true },
  { line: true, tight: true },
  { label: "Biçimlendir..." },
  { label: "Çıkar" },
  { line: true },
  { label: "Kes" },
  { label: "Kopyala" },
  { line: true },
  { label: "Kısayol Oluştur" },
  { label: "Yeniden Adlandır" },
  { line: true },
  { label: "Özellikler" },
];

const commands = ["Çıkar", "Özellikler", "Sistem özellikleri", "Program kaldır veya değiştir", "Ağ sürücüsüne bağlan"];

/* ---------- parts ---------- */

const Capacity = ({ used, width = 189 }) => (
  <Track $width={width} role="meter" aria-label="Kullanılan alan" aria-valuenow={used} aria-valuemin={0} aria-valuemax={100}>
    <Fill style={{ width: `${used}%` }} />
  </Track>
);

const ContextMenu = () => (
  <Menu role="menu">
    {menu.map((item, i) =>
      item.line ? (
        <MenuLine key={i} role="separator" $tight={item.tight} />
      ) : (
        <MenuItem key={i} role="menuitem" $default={item.bold} $compact={item.compact} $hot={item.hot}>
          <MenuIcon>{item.icon && <item.icon />}</MenuIcon>
          {item.label}
          {item.sub && <Right />}
        </MenuItem>
      )
    )}
  </Menu>
);

const App = () => (
  <Page>
    <GlobalStyle />
    <DriveDefs />
    <Window>
      <Caption>
        <CaptionButton $first aria-label="Simge durumuna küçült">
          <svg width="13" height="6" viewBox="0 0 13 6"><rect x=".5" y=".5" width="12" height="4" rx="1" fill="#fff" stroke="#4c5a68" /></svg>
        </CaptionButton>
        <CaptionButton aria-label="Ekranı kapla">
          <svg width="12" height="10" viewBox="0 0 12 10">
            <rect x=".5" y=".5" width="11" height="9" rx="1" fill="#fff" stroke="#4c5a68" />
            <rect x="3.500" y="3.500" width="5" height="3" fill="#b5c9dd" stroke="#4c5a68" />
          </svg>
        </CaptionButton>
        <CaptionButton $close aria-label="Kapat">
          <svg width="12" height="10" viewBox="0 0 12 10">
            <path d="M.5.500h3.300L6 3 8.200.5h3.300L7.900 5l3.600 4.500H8.200L6 7 3.800 9.500H.5L4.100 5z" fill="#fff" stroke="#4c3c48" strokeWidth=".9" />
          </svg>
        </CaptionButton>
      </Caption>

      <NavRow>
        <NavButtons>
          <RoundButton aria-label="Geri"><NavArrow /></RoundButton>
          <RoundButton aria-label="İleri"><NavArrow flip /></RoundButton>
        </NavButtons>
        <HistoryButton aria-label="Son sayfalar">
          <svg width="9" height="6" viewBox="0 0 9 6"><path d="M.8.500h7.400L4.500 5z" fill="#eef6fd" stroke="#86a5c4" /></svg>
        </HistoryButton>
        <AddressBar>
          <ComputerIcon />
          <Crumb aria-label="Konumlar"><Right /></Crumb>
          <Crumb>Bilgisayar <Right /></Crumb>
          <DropButton aria-label="Önceki konumlar"><Down color="#111" /></DropButton>
          <RefreshButton aria-label="Yenile"><Refresh /></RefreshButton>
        </AddressBar>
        <SearchBox>
          <input type="text" placeholder="Ara: Bilgisayar" aria-label="Ara: Bilgisayar" />
          <Magnifier />
        </SearchBox>
      </NavRow>

      <Client>
        <Toolbar>
          <Commands>
            <ToolButton>Düzenle <Down /></ToolButton>
            {commands.map((c) => (
              <ToolButton key={c}>{c}</ToolButton>
            ))}
            <MoreButton>»</MoreButton>
          </Commands>
          <ToolIcons>
            <ToolButton aria-label="Görünümü değiştir"><ViewIcon /><Down /></ToolButton>
            <ToolButton aria-label="Önizleme bölmesi"><PaneIcon /></ToolButton>
            <ToolButton aria-label="Yardım"><HelpIcon /></ToolButton>
          </ToolIcons>
        </Toolbar>

        <Body>
          <Sidebar>
            {trees.map((tree) => (
              <Tree key={tree[0][0]}>
                {tree.map(([label, Icon], i) => (
                  <li key={label}>
                    <TreeLink href="#" $child={i > 0} $selected={label === "Bilgisayar"}>
                      <Icon />
                      {label}
                    </TreeLink>
                  </li>
                ))}
              </Tree>
            ))}
          </Sidebar>

          <Files>
            {groups.map((group) => (
              <section key={group.title}>
                <GroupHeader><Corner />{group.title}</GroupHeader>
                <Tiles>
                  {group.items.map((item) => (
                    <TileCell key={item.name}>
                      <Tile $selected={item.selected}>
                        <item.icon />
                        <TileText>
                          {item.name}
                          {item.used !== undefined && <Capacity used={item.used} />}
                          {item.note && <Muted>{item.note}</Muted>}
                        </TileText>
                      </Tile>
                      {item.selected && <ContextMenu />}
                    </TileCell>
                  ))}
                </Tiles>
              </section>
            ))}
          </Files>
        </Body>

        <Details>
          <BigUsb size={44} />
          <DetailGrid>
            <DetailTitle $main>Çıkarılabilir Disk (H:)</DetailTitle>
            <dt>Kullanılan alan:</dt>
            <dd><Capacity used={0} width={133} /></dd>
            <dt>Toplam Boyut:</dt>
            <dd>14,4 GB</dd>
            <DetailTitle>Çıkarılabilir Disk</DetailTitle>
            <dt>Boş alan:</dt>
            <dd>14,4 GB</dd>
            <dt>Dosya sistemi:</dt>
            <dd>FAT32</dd>
          </DetailGrid>
        </Details>
      </Client>
    </Window>
  </Page>
);

export default App;
